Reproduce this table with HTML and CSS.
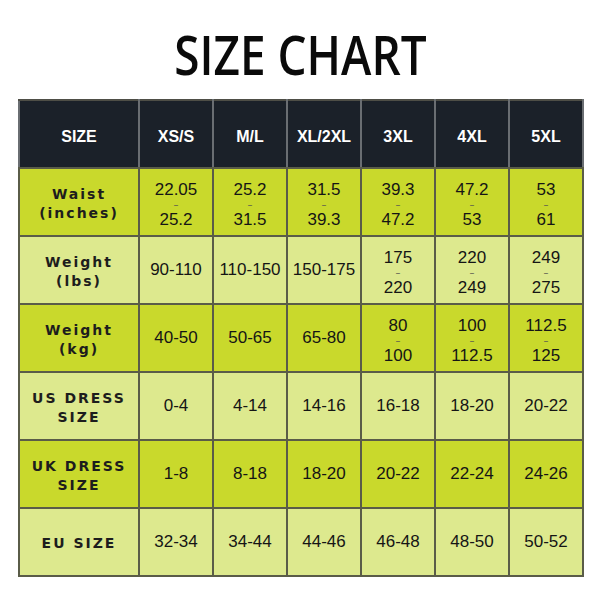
FILE: index.html
```html
<!DOCTYPE html>
<html>
<head>
<meta charset="utf-8">
<link rel="stylesheet" href="styles.css">
</head>
<body>
<h1 class="title"><span class="title-text">SIZE CHART</span></h1>
<table class="chart">
  <colgroup><col class="c-label"><col><col><col><col><col><col></colgroup>
  <tr class="head">
    <th>SIZE</th><th>XS/S</th><th>M/L</th><th>XL/2XL</th><th>3XL</th><th>4XL</th><th>5XL</th>
  </tr>
  <tr class="dark">
    <td class="label">Waist<br>(inches)</td>
    <td class="range"><span class="num">22.05</span><span class="dash">-</span><span class="num">25.2</span></td>
    <td class="range"><span class="num">25.2</span><span class="dash">-</span><span class="num">31.5</span></td>
    <td class="range"><span class="num">31.5</span><span class="dash">-</span><span class="num">39.3</span></td>
    <td class="range"><span class="num">39.3</span><span class="dash">-</span><span class="num">47.2</span></td>
    <td class="range"><span class="num">47.2</span><span class="dash">-</span><span class="num">53</span></td>
    <td class="range"><span class="num">53</span><span class="dash">-</span><span class="num">61</span></td>
  </tr>
  <tr class="light">
    <td class="label">Weight<br>(lbs)</td>
    <td>90-110</td><td>110-150</td><td>150-175</td>
    <td class="range"><span class="num">175</span><span class="dash">-</span><span class="num">220</span></td>
    <td class="range"><span class="num">220</span><span class="dash">-</span><span class="num">249</span></td>
    <td class="range"><span class="num">249</span><span class="dash">-</span><span class="num">275</span></td>
  </tr>
  <tr class="dark">
    <td class="label">Weight<br>(kg)</td>
    <td>40-50</td><td>50-65</td><td>65-80</td>
    <td class="range"><span class="num">80</span><span class="dash">-</span><span class="num">100</span></td>
    <td class="range"><span class="num">100</span><span class="dash">-</span><span class="num">112.5</span></td>
    <td class="range"><span class="num">112.5</span><span class="dash">-</span><span class="num">125</span></td>
  </tr>
  <tr class="light">
    <td class="label">US DRESS<br>SIZE</td>
    <td>0-4</td><td>4-14</td><td>14-16</td><td>16-18</td><td>18-20</td><td>20-22</td>
  </tr>
  <tr class="dark">
    <td class="label">UK DRESS<br>SIZE</td>
    <td>1-8</td><td>8-18</td><td>18-20</td><td>20-22</td><td>22-24</td><td>24-26</td>
  </tr>
  <tr class="light">
    <td class="label">EU SIZE</td>
    <td>32-34</td><td>34-44</td><td>44-46</td><td>46-48</td><td>48-50</td><td>50-52</td>
  </tr>
</table>
</body>
</html>
```
FILE: styles.css
```css
html, body {
  margin: 0;
  padding: 0;
  background: #ffffff;
}

.title {
  margin: 27px 0 18px;
  height: 54px;
  line-height: 54px;
  text-align: center;
  font-family: "Open Sans", sans-serif;
  font-weight: 600;
  font-size: 54px;
  color: #0a0a0a;
}

.title-text {
  display: inline-block;
  transform: scaleX(0.85);
}

.chart {
  margin-left: 18px;
  width: 566px;
  table-layout: fixed;
  border-collapse: collapse;
  border: 2px solid #4e4e46;
  font-family: "Liberation Sans", Arial, sans-serif;
  font-size: 17px;
  color: #151515;
}

.c-label {
  width: 120px;
}

.chart tr {
  height: 68px;
}

.chart th,
.chart td {
  padding: 0;
  text-align: center;
  vertical-align: middle;
  border: 2px solid #5a5c48;
}

.head th {
  background: #1b2129;
  color: #ffffff;
  font-weight: bold;
  font-size: 16px;
  padding-top: 5px;
  border-color: #6a6e72;
  border-top-color: #4e4e46;
  border-bottom-color: #5a5c48;
}

.dark td {
  background: #c9d92c;
}

.light td {
  background: #dde98e;
}

.chart td.range {
  padding-top: 6px;
}

.num {
  display: block;
  line-height: 20px;
}

.dash {
  display: block;
  font-size: 9px;
  line-height: 10px;
  color: #5a5a50;
  transform: scaleX(1.8);
}

.chart td.label {
  font-family: "DejaVu Sans", sans-serif;
  font-weight: bold;
  font-size: 14px;
  letter-spacing: 2px;
  line-height: 19px;
  padding-top: 3px;
  color: #1d1d1d;
}
```
